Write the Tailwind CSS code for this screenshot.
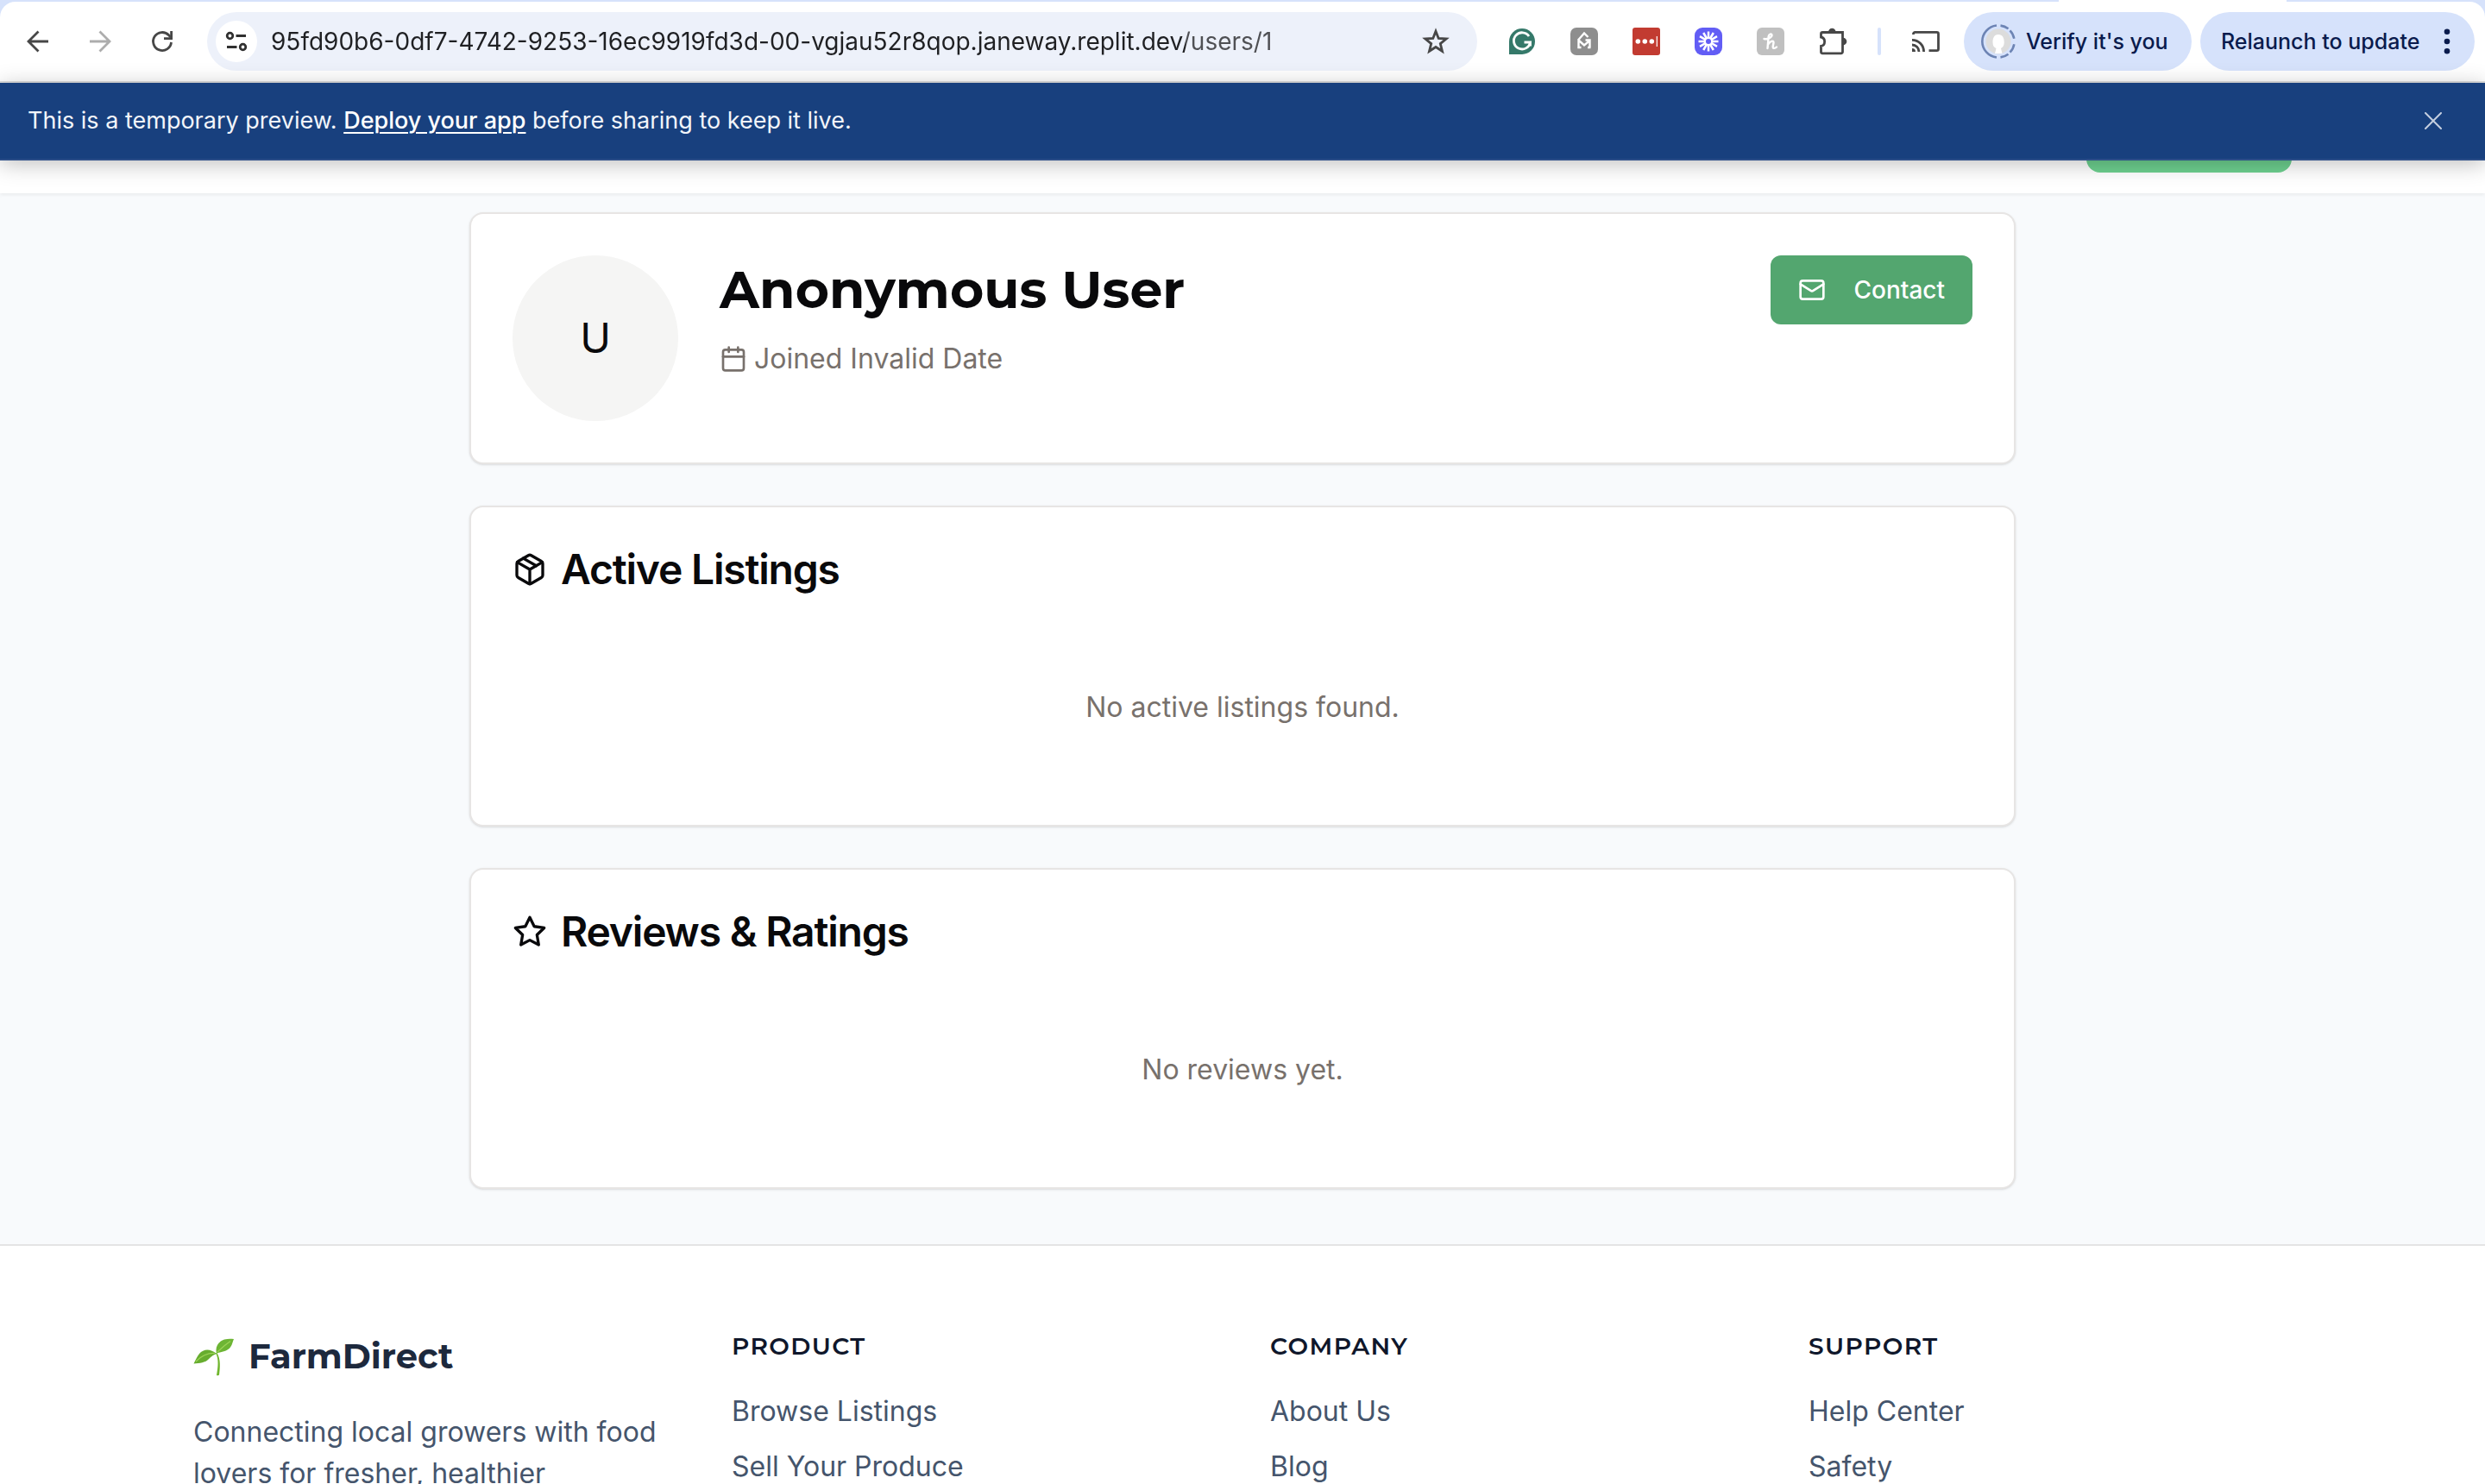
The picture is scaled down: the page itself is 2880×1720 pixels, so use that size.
<!DOCTYPE html>
<html lang="en">
<head>
<meta charset="utf-8">
<title>FarmDirect – Anonymous User</title>
<script src="https://cdn.jsdelivr.net/npm/@tailwindcss/browser@4"></script>
</head>
<body class="flex h-screen flex-col overflow-hidden bg-slate-50 font-['Inter','Roboto',sans-serif] text-[32px] leading-[48px] text-[#09090b]">

<!-- Browser toolbar -->
<div class="relative shrink-0 bg-[#d6e2fb] pt-0.5">
  <div class="absolute top-0 right-[230px] h-0.5 w-[264px] bg-white"></div>
  <div class="flex h-[94px] items-center rounded-t-[18px] border-b-2 border-[#dfdfdf] bg-white pr-3 pl-2 text-[#474747]">
    <button aria-label="Back" class="flex w-18 justify-center"><svg class="size-8" viewBox="0 0 32 32" fill="none" stroke="currentColor" stroke-width="2.8"><path d="M28 16H6M16.500 4.500L5 16l11.500 11.500"/></svg></button>
    <button aria-label="Forward" class="flex w-18 justify-center text-[#adadad]"><svg class="size-8" viewBox="0 0 32 32" fill="none" stroke="currentColor" stroke-width="2.800"><path d="M4 16h22M15.500 4.500L27 16 15.500 27.500"/></svg></button>
    <button aria-label="Reload" class="flex w-18 justify-center"><svg class="size-8" viewBox="0 0 32 32" fill="none" stroke="currentColor" stroke-width="2.800"><path d="M26.500 17A10.500 10.500 0 1 1 23.600 8.700L26 11.200"/><path d="M26.600 4v8.600H18"/></svg></button>

    <div class="ml-4 flex h-[68px] min-w-0 flex-1 items-center rounded-full bg-[#edf1fa] pr-8 pl-2.5">
      <button aria-label="Site information" class="flex size-12 items-center justify-center rounded-full bg-white text-[#303030]"><svg class="size-8" viewBox="0 0 32 32" fill="none" stroke="currentColor" stroke-width="2.800"><circle cx="8.500" cy="9.500" r="3.300"/><path d="M15.500 9.500H27M5 22.500h11.500"/><circle cx="23.500" cy="22.500" r="3.300"/></svg></button>
      <input aria-label="Address" type="text" value="95fd90b6-0df7-4742-9253-16ec9919fd3d-00-vgjau52r8qop.janeway.replit.dev/users/1" class="ml-4 min-w-0 flex-1 bg-[linear-gradient(to_right,#1f2023_1060px,#4f5054_1060px)] bg-clip-text text-[28px] leading-9 text-transparent">
      <button aria-label="Bookmark this page"><svg class="size-8" viewBox="0 0 32 32" fill="none" stroke="currentColor" stroke-width="2.800"><path d="M16 4.200l3.200 8.200 9 .6-6.900 5.600 2.200 8.700-7.500-4.800-7.500 4.800 2.200-8.700L3.800 13l9-.6z"/></svg></button>
    </div>

    <div class="ml-4 flex items-center">
      <button aria-label="Grammarly" class="flex w-18 justify-center"><svg class="size-8" viewBox="0 0 32 32"><path d="M16 1a15 15 0 0 1 0 30H1V16A15 15 0 0 1 16 1z" fill="#35796a"/><path d="M24 10A9.600 9.600 0 1 0 25.500 17H18.500M25.500 16v5.500" fill="none" stroke="#fff" stroke-width="2.800"/></svg></button>
      <button aria-label="GM extension" class="flex w-18 justify-center"><svg class="size-8" viewBox="0 0 32 32"><rect width="32" height="32" rx="7" fill="#8e8e8e"/><path d="M9 14.500L16 6.500l4.500 4.500M9.500 13v10h3M22.500 23V14.500h-5M22.500 15L16 20.500l-6-5.500M20 23h3.500" fill="none" stroke="#fff" stroke-width="2.400"/></svg></button>
      <button aria-label="LastPass" class="flex w-18 justify-center"><svg class="size-8" viewBox="0 0 32 32"><rect width="32" height="32" rx="3" fill="#c23b31"/><circle cx="6.300" cy="16" r="2.800" fill="#fff"/><circle cx="14.300" cy="16" r="2.800" fill="#fff"/><circle cx="22.300" cy="16" r="2.800" fill="#fff"/><path d="M28.300 10v12" stroke="#fff" stroke-width="1.200"/></svg></button>
      <button aria-label="Loom" class="flex w-18 justify-center"><svg class="size-8" viewBox="0 0 32 32"><rect width="32" height="32" rx="9" fill="#625df5"/><g stroke="#fff" stroke-width="2.500"><path d="M16 4.500v23M4.500 16h23M10.200 6l11.600 20M6 10.200l20 11.600M6 21.800l20-11.600M10.200 26l11.600-20"/></g><circle cx="16" cy="16" r="5.300" fill="#fff"/><circle cx="16" cy="16" r="3" fill="#625df5"/></svg></button>
      <button aria-label="Honey" class="flex w-18 justify-center"><svg class="size-8" viewBox="0 0 32 32"><rect width="32" height="32" rx="6" fill="#c0c0c0"/><path d="M8.500 13c4 1 9.500-2 9-4.500-.4-1.800-3.300-1.300-3.800 1.500L12.500 24M13.500 19c1.500-3 6.200-5 6-1.500l-.8 4.500c-.3 2.500 2.500 2.300 4.300.5" fill="none" stroke="#fff" stroke-width="2.400" stroke-linecap="round"/></svg></button>
      <button aria-label="Extensions" class="flex w-18 justify-center"><svg class="h-9 w-9" viewBox="0 0 36 36"><path d="M6.500 7.500h23v6.500M29.500 21.500V30a1.800 1.800 0 0 1-1.800 1.800H6a1.800 1.800 0 0 1-1.500-1.800v-6.500c5.500-1 5.500-9.500 0-10.500V9.300A1.800 1.800 0 0 1 6.300 7.500h21.400a1.800 1.800 0 0 1 1.800 1.800V22" fill="none" stroke="#474747" stroke-width="2.800"/><path d="M13 7a4.300 4.300 0 0 1 8.600 0zM30 13.700a4.300 4.300 0 0 1 0 8.600z" fill="#474747"/></svg></button>
      <div class="flex w-9 justify-center"><div class="h-8 w-1 rounded-full bg-[#d6e2fb]"></div></div>
      <button aria-label="Cast" class="flex w-18 justify-center"><svg class="size-9" viewBox="0 0 36 36" fill="none" stroke="#474747" stroke-width="2.800"><path d="M3.500 10V9.300A1.900 1.900 0 0 1 5.400 7.400h25.200a1.900 1.900 0 0 1 1.900 1.900v17.400a1.900 1.900 0 0 1-1.900 1.900H21.500M2 16.400A13.500 13.500 0 0 1 15.600 30M2 22a8 8 0 0 1 8 8"/><path d="M2 26v4h4a4 4 0 0 0-4-4z" fill="#474747" stroke="none"/></svg></button>
    </div>

    <button class="ml-2 flex h-[68px] w-[264px] items-center rounded-full bg-[#d6e2fb] pl-5 text-[25px] font-medium whitespace-nowrap text-[#0a1b4d]">
      <svg class="mr-3 size-10" viewBox="0 0 40 40"><circle cx="20" cy="20" r="14.500" fill="#dcdcdc"/><path d="M20 12c-5.500 0-6.500 5-6.500 9 0 4 1.500 6 4 7l-1.500 6h8.500l-1.500-6c2-1 4-3 3.700-8-.2-4-1.700-8-6.700-8z" fill="#fff"/><g fill="none" stroke="#6d84b4" stroke-width="2.600"><path d="M18 1.500A18.600 18.600 0 0 0 18 38.500M22.500 1.600a18.600 18.600 0 0 1 9 3.700M33.500 7.300a18.600 18.600 0 0 1 4.800 9.500M38.300 23.200a18.600 18.600 0 0 1-4.800 9.500M31.500 34.700a18.600 18.600 0 0 1-9 3.700"/></g></svg>
      Verify it's you
    </button>
    <button class="ml-2.5 flex h-[68px] w-[318px] items-center justify-between rounded-full bg-[#d6e2fb] pr-6 pl-6 text-[25px] font-medium whitespace-nowrap text-[#0a1b4d]">
      Relaunch to update
      <svg class="h-10 w-4" viewBox="0 0 16 40" fill="currentColor"><circle cx="8" cy="8.700" r="3.300"/><circle cx="8" cy="20" r="3.300"/><circle cx="8" cy="31.300" r="3.300"/></svg>
    </button>
  </div>
</div>

<!-- Preview banner -->
<div class="relative z-10 flex h-[90px] shrink-0 items-center justify-between border-b-2 border-[#2c4e88] bg-[#18407e] pr-10 pl-8 text-[27px] text-[#f2f5fa] shadow-[0_4px_24px_rgba(0,0,0,0.25)]">
  <p>This is a temporary preview. <a href="#" class="font-medium text-white underline decoration-2 underline-offset-4">Deploy your app</a> before sharing to keep it live.</p>
  <button aria-label="Dismiss" class="flex size-10 items-center justify-center text-[#c5cfe0]"><svg class="size-5" viewBox="0 0 20 20" fill="none" stroke="currentColor" stroke-width="2" stroke-linecap="round"><path d="M1 1l18 18M19 1L1 19"/></svg></button>
</div>

<!-- Site navigation, scrolled under the banner -->
<header class="flex h-[38px] shrink-0 items-end bg-white shadow-[0_2px_4px_rgba(0,0,0,0.06)]">
  <nav class="-mt-[90px] mx-auto flex h-32 w-full max-w-[2560px] items-center justify-end px-16">
    <button aria-label="Add listing" class="h-20 w-[238px] rounded-2xl bg-[#6dd08f]"></button>
  </nav>
</header>

<main class="mx-auto mt-[22px] flex w-full max-w-[1792px] shrink-0 flex-col gap-12">
  <section class="flex gap-12 rounded-2xl border-2 border-[#e7e5e4] bg-white p-12 shadow-sm">
    <div class="flex size-48 items-center justify-center rounded-full bg-[#f5f5f4] text-[48px]">U</div>
    <div class="flex-1">
      <div class="flex h-20 items-center justify-between">
        <h1 class="font-['Montserrat','Inter',sans-serif] text-[60px] leading-[72px] font-bold">Anonymous User</h1>
        <button class="flex h-20 items-center gap-8 rounded-xl bg-[#53a66f] px-8 text-[28px] font-medium text-white">
          <svg class="size-8" viewBox="0 0 24 24" fill="none" stroke="currentColor" stroke-width="2" stroke-linecap="round" stroke-linejoin="round"><rect width="20" height="16" x="2" y="4" rx="2"/><path d="m22 7-8.970 5.700a1.940 1.940 0 0 1-2.060 0L2 7"/></svg>
          Contact
        </button>
      </div>
      <p class="mt-4 flex items-center gap-2 text-[#78716c]">
        <svg class="size-8" viewBox="0 0 24 24" fill="none" stroke="currentColor" stroke-width="2" stroke-linecap="round" stroke-linejoin="round"><path d="M8 2v4M16 2v4"/><rect width="18" height="18" x="3" y="4" rx="2"/><path d="M3 10h18"/></svg>
        Joined Invalid Date
      </p>
    </div>
  </section>

  <section class="rounded-2xl border-2 border-[#e7e5e4] bg-white p-12 shadow-sm">
    <h2 class="flex items-center gap-4 text-[48px] font-semibold tracking-tight">
      <svg class="size-10" viewBox="0 0 24 24" fill="none" stroke="currentColor" stroke-width="2" stroke-linecap="round" stroke-linejoin="round"><path d="m7.500 4.270 9 5.150"/><path d="M21 8a2 2 0 0 0-1-1.730l-7-4a2 2 0 0 0-2 0l-7 4A2 2 0 0 0 3 8v8a2 2 0 0 0 1 1.730l7 4a2 2 0 0 0 2 0l7-4A2 2 0 0 0 21 16Z"/><path d="m3.300 7 8.700 5 8.700-5M12 22V12"/></svg>
      Active Listings
    </h2>
    <p class="mt-12 py-16 text-center text-[#78716c]">No active listings found.</p>
  </section>

  <section class="rounded-2xl border-2 border-[#e7e5e4] bg-white p-12 shadow-sm">
    <h2 class="flex items-center gap-4 text-[48px] font-semibold tracking-tight">
      <svg class="size-10" viewBox="0 0 24 24" fill="none" stroke="currentColor" stroke-width="2" stroke-linecap="round" stroke-linejoin="round"><path d="M12 2l3.090 6.260L22 9.270l-5 4.870 1.180 6.880L12 17.770l-6.180 3.250L7 14.140 2 9.270l6.910-1.010L12 2z"/></svg>
      Reviews &amp; Ratings
    </h2>
    <p class="mt-12 py-16 text-center text-[#78716c]">No reviews yet.</p>
  </section>
</main>

<footer class="mt-16 shrink-0 border-t-2 border-[#e4e4e4] bg-white">
  <div class="mx-auto grid max-w-[2560px] grid-cols-4 gap-16 px-16 py-24 text-slate-600">
    <div>
      <div class="flex h-16 items-center gap-4">
        <svg class="size-12" viewBox="0 0 48 48">
          <path d="M26 20c4 8 2.500 17 1 26 1.500.5 2.500.3 3-.5 1-8 2-18-2.500-25.500z" fill="#6fb52c"/>
          <path d="M27 21C20 15 12 15 7 21c-3 4-4 7-6.500 11.500C8 32 14 31 17 28c3-3 5-5 10-7z" fill="#67ad2f"/>
          <path d="M27 20.500C25 13 29 7 36 4.500c4-1 7-1 11-.5-1.500 3-1.500 6-4 9.500-4 5-10 5-16 7z" fill="#6db534"/>
          <path d="M25 20.500C16 20 9 24 3 30M28 19C33 14 38 10 43 6.500" fill="none" stroke="#9dd457" stroke-width="1.200"/>
        </svg>
        <span class="font-['Montserrat','Inter',sans-serif] text-[40px] font-bold text-slate-800">FarmDirect</span>
      </div>
      <p class="mt-8">Connecting local growers with food lovers for fresher, healthier communities.</p>
    </div>
    <div>
      <h3 class="font-['Montserrat','Inter',sans-serif] text-[28px] leading-10 font-semibold tracking-wider text-slate-900 uppercase">Product</h3>
      <ul class="mt-8 flex flex-col gap-4"><li><a href="#">Browse Listings</a></li><li><a href="#">Sell Your Produce</a></li></ul>
    </div>
    <div>
      <h3 class="font-['Montserrat','Inter',sans-serif] text-[28px] leading-10 font-semibold tracking-wider text-slate-900 uppercase">Company</h3>
      <ul class="mt-8 flex flex-col gap-4"><li><a href="#">About Us</a></li><li><a href="#">Blog</a></li></ul>
    </div>
    <div>
      <h3 class="font-['Montserrat','Inter',sans-serif] text-[28px] leading-10 font-semibold tracking-wider text-slate-900 uppercase">Support</h3>
      <ul class="mt-8 flex flex-col gap-4"><li><a href="#">Help Center</a></li><li><a href="#">Safety</a></li></ul>
    </div>
  </div>
</footer>
</body>
</html>
